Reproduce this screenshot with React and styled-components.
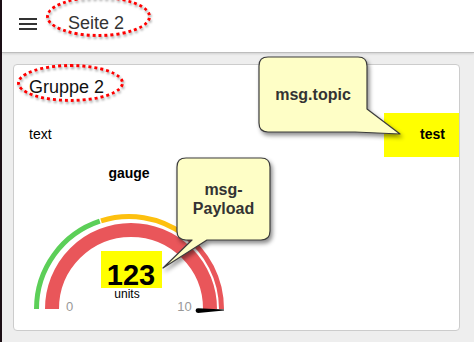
import React from 'react';
import styled, { createGlobalStyle } from 'styled-components';

const GlobalStyle = createGlobalStyle`
  html, body, #root {
    margin: 0;
    height: 100%;
  }
  body {
    background: #eeeeee;
    font-family: "Liberation Sans", Arial, sans-serif;
  }
`;

const arc = (cx, cy, r, a0, a1) => {
  const pt = (a) => [cx + r * Math.cos((a * Math.PI) / 180), cy - r * Math.sin((a * Math.PI) / 180)];
  const [x0, y0] = pt(a0);
  const [x1, y1] = pt(a1);
  return `M${x0.toFixed(2)} ${y0.toFixed(2)} A${r} ${r} 0 0 1 ${x1.toFixed(2)} ${y1.toFixed(2)}`;
};

const Callout = ({ left, top, width, height, tail, children }) => {
  const r = 9;
  const d = `M${r},0 H${width - r} Q${width},0 ${width},${r} ${tail}`;
  return (
    <Bubble style={{ left, top, width, height }}>
      <BubbleShape width={width} height={height}>
        <path d={d} fill="#fefec6" stroke="#3c3c3c" strokeWidth="1.2" strokeLinejoin="round" />
      </BubbleShape>
      <BubbleText>{children}</BubbleText>
    </Bubble>
  );
};

const App = () => {
  const cx = 109;
  const cy = 122;
  return (
    <>
      <GlobalStyle />
      <Page>
        <Strip />
        <Main>
          <Header>
            <MenuIcon width="18" height="12" viewBox="0 0 18 12">
              <rect x="0" y="0" width="18" height="2" fill="#333" />
              <rect x="0" y="5" width="18" height="2" fill="#333" />
              <rect x="0" y="10" width="18" height="2" fill="#333" />
            </MenuIcon>
            <PageTitle>
              Seite 2
              <Ring $w={105} $h={41} $l={-22} $t={-15} />
            </PageTitle>
          </Header>
          <Content>
            <Card>
              <GroupTitle>
                Gruppe 2
                <Ring $w={107} $h={38} $l={-12} $t={-11} />
              </GroupTitle>
              <TextRow>
                <Label>text</Label>
                <ValueBox>test</ValueBox>
              </TextRow>
              <GaugeWidget>
                <GaugeTitle>gauge</GaugeTitle>
                <svg width="218" height="132" viewBox="0 0 218 132">
                  <path d={arc(cx, cy, 92.5, 180, 108.4)} stroke="#5ccf58" strokeWidth="5" fill="none" />
                  <path d={arc(cx, cy, 92.5, 107.6, 54)} stroke="#fdc00f" strokeWidth="5" fill="none" />
                  <path d={arc(cx, cy, 92.5, 54, 0)} stroke="#e9565a" strokeWidth="5" fill="none" />
                  <path d={arc(cx + 2, cy, 79, 180, 0)} stroke="#e9565a" strokeWidth="14" fill="none" />
                  <path d="M178,121.2 L204,122.4 L204,123.6 L178,126 A2.4,2.4 0 0 1 178,121.2 Z" fill="#000" />
                  <text x="49.5" y="124" fontSize="13" fill="#999" textAnchor="middle" fontFamily="Liberation Sans, Arial, sans-serif">0</text>
                  <text x="164.5" y="124" fontSize="13" fill="#999" textAnchor="middle" fontFamily="Liberation Sans, Arial, sans-serif">10</text>
                  <rect x="81" y="64" width="61" height="37" fill="#ffff00" />
                  <text x="111" y="98" fontSize="29" fontWeight="bold" fill="#000" textAnchor="middle" fontFamily="Liberation Sans, Arial, sans-serif">123</text>
                  <text x="107" y="111" fontSize="12" fill="#000" textAnchor="middle" fontFamily="Liberation Sans, Arial, sans-serif">units</text>
                </svg>
              </GaugeWidget>
            </Card>
          </Content>
        </Main>
        <Callout left={259} top={57} width={108} height={75} tail="V52 L141,77 L96,75 H9 Q0,75 0,66 V9 Q0,0 9,0 Z">
          msg.topic
        </Callout>
        <Callout left={177} top={158} width={93} height={82} tail="V73 Q93,82 84,82 H30 L-14,110 L15,82 H9 Q0,82 0,73 V9 Q0,0 9,0 Z">
          msg-
          <br />
          Payload
        </Callout>
      </Page>
    </>
  );
};

export default App;

const Page = styled.div`
  position: relative;
  display: flex;
  min-height: 100vh;
  overflow: hidden;
`;

const Strip = styled.div`
  width: 2px;
  flex-shrink: 0;
  background: #1c0f16;
`;

const Main = styled.div`
  flex: 1;
  display: flex;
  flex-direction: column;
`;

const Header = styled.div`
  display: flex;
  align-items: center;
  height: 53px;
  box-sizing: border-box;
  padding: 0 0 6px 17px;
  background: #fff;
  border-bottom: 1px solid #bdbdbd;
  box-shadow: 0 1px 2px rgba(0, 0, 0, 0.12);
`;

const MenuIcon = styled.svg`
  display: block;
  margin-top: 1px;
`;

const PageTitle = styled.div`
  position: relative;
  margin-left: 31px;
  font-size: 18px;
  line-height: 24px;
  color: #333;
`;

const Ring = styled.div`
  position: absolute;
  left: ${(p) => p.$l}px;
  top: ${(p) => p.$t}px;
  width: ${(p) => p.$w}px;
  height: ${(p) => p.$h}px;
  box-sizing: border-box;
  border: 3.5px dotted #ff0000;
  border-radius: 50%;
  filter: drop-shadow(1px 2px 1px rgba(0, 0, 0, 0.35));
  pointer-events: none;
`;

const Content = styled.div`
  padding: 11px 14px 0 11px;
`;

const Card = styled.div`
  height: 267px;
  box-sizing: border-box;
  background: #fff;
  border: 1px solid #cccccc;
  border-radius: 4px;
`;

const GroupTitle = styled.div`
  position: relative;
  display: inline-block;
  margin: 10px 0 0 15px;
  font-size: 18px;
  line-height: 24px;
  color: #111;
`;

const TextRow = styled.div`
  display: flex;
  justify-content: space-between;
  align-items: center;
  height: 44px;
  margin-top: 14px;
  padding-left: 15px;
`;

const Label = styled.div`
  font-size: 14px;
  color: #000;
  padding-bottom: 3px;
`;

const ValueBox = styled.div`
  display: flex;
  align-items: center;
  justify-content: flex-end;
  box-sizing: border-box;
  width: 75px;
  height: 44px;
  padding: 0 14px 3px 0;
  background: #ffff00;
  font-size: 14px;
  font-weight: bold;
  color: #000;
`;

const GaugeWidget = styled.div`
  width: 218px;
  margin: 6px 0 0 6px;
`;

const GaugeTitle = styled.div`
  text-align: center;
  font-size: 14px;
  font-weight: bold;
  line-height: 20px;
  color: #000;
  margin-bottom: 4px;
`;

const Bubble = styled.div`
  position: absolute;
  display: flex;
  align-items: center;
  justify-content: center;
`;

const BubbleShape = styled.svg.attrs((p) => ({ viewBox: `0 0 ${p.width} ${p.height}` }))`
  position: absolute;
  left: 0;
  top: 0;
  overflow: visible;
  filter: drop-shadow(2px 3px 2px rgba(0, 0, 0, 0.45));
`;

const BubbleText = styled.div`
  position: relative;
  text-align: center;
  font-size: 16px;
  font-weight: bold;
  line-height: 19px;
  color: #333;
`;
